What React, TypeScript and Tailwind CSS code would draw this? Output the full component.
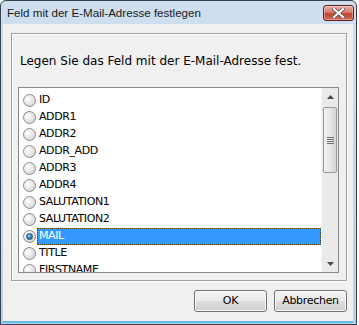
import React from 'react'

const fields = [
    'ID', 'ADDR1', 'ADDR2', 'ADDR_ADD', 'ADDR3', 'ADDR4',
    'SALUTATION1', 'SALUTATION2', 'MAIL', 'TITLE', 'FIRSTNAME',
]

function Radio({ checked }: { checked?: boolean }) {
    return (
        <div className="w-[13px] h-[13px] shrink-0 rounded-full border border-[#8a8a8a] bg-[radial-gradient(circle_at_35%_35%,#ffffff,#dcdcdc_70%,#c8c8c8)] flex items-center justify-center">
            {checked && (
                <div className="w-[7px] h-[7px] rounded-full border border-[#1d4770] bg-[radial-gradient(circle_at_40%_35%,#8fd0f5,#2a7ab8_60%,#103a66)]" />
            )}
        </div>
    )
}

function ScrollArrow({ up }: { up?: boolean }) {
    return (
        <div className="h-[17px] flex items-center justify-center">
            <svg width="7" height="4" viewBox="0 0 7 4">
                {up
                    ? <polygon points="3.5,0 7,4 0,4" fill="#4d4d4d" />
                    : <polygon points="0,0 7,0 3.5,4" fill="#4d4d4d" />}
            </svg>
        </div>
    )
}

function Scrollbar() {
    return (
        <div className="w-[17px] h-full flex flex-col bg-[#eaeaea] border-l border-[#f4f4f4]">
            <ScrollArrow up />
            <div className="flex-1 pt-[2px] px-[1px] pb-[1px] flex flex-col">
                <div className="h-[66px] rounded-[2px] border border-[#979797] bg-gradient-to-r from-[#f2f2f2] via-[#e6e6e6] to-[#d4d4d4] flex flex-col items-center justify-center gap-[1px]">
                    <div className="w-[7px] h-[1px] bg-[#6f6f6f]" />
                    <div className="w-[7px] h-[1px] bg-[#6f6f6f]" />
                    <div className="w-[7px] h-[1px] bg-[#6f6f6f]" />
                    <div className="w-[7px] h-[1px] bg-[#6f6f6f]" />
                </div>
                <div className="flex-1" />
            </div>
            <ScrollArrow />
        </div>
    )
}

function WinButton({ label }: { label: string }) {
    return (
        <button className="w-[73px] h-[22px] rounded-[3px] border border-[#707070] bg-[linear-gradient(#f2f2f2,#ebebeb_50%,#dddddd_50%,#cfcfcf)] shadow-[inset_0_0_0_1px_#fcfcfc] text-[11px] text-black font-['DejaVu_Sans',sans-serif] tracking-[-0.3px]">
            {label}
        </button>
    )
}

export default function App() {
    return (
        <div className="w-[359px] h-[325px] bg-white font-['DejaVu_Sans',sans-serif]">
            <div className="w-[357px] h-[325px] border border-[#34404d] rounded-t-[6px] bg-gradient-to-b from-[#cfdff0] to-[#b9d1ea] flex flex-col">
                {/* Title bar */}
                <div className="h-[23px] shrink-0 flex items-center pl-[6px] relative">
                    <span className="text-[11.6px] text-[#1a1a1a] font-['Liberation_Sans',sans-serif]">
                        Feld mit der E-Mail-Adresse festlegen
                    </span>
                    <div className="absolute right-[2px] top-[4px] w-[31px] h-[16px] rounded-[3px] border border-[#5e2219] bg-[linear-gradient(#e8b0a6,#d47a6b_45%,#c0412f_55%,#cf6a55)] shadow-[inset_0_0_0_1px_rgba(255,255,255,0.35)] flex items-center justify-center">
                        <svg width="13" height="10" viewBox="0 0 13 10">
                            <path d="M2 1 L11 9 M11 1 L2 9" stroke="#5a5a5a" strokeWidth="3.6" strokeLinecap="square" />
                            <path d="M2 1 L11 9 M11 1 L2 9" stroke="#ffffff" strokeWidth="2" strokeLinecap="square" />
                        </svg>
                    </div>
                </div>

                {/* Client area */}
                <div className="flex-1 ml-[2px] mr-[3px] mb-[3px] bg-[#f0f0f0] border-b border-[#f0f0f0] flex flex-col shadow-[0_2px_0_#64b9e4]">
                    {/* Group box */}
                    <div className="mt-[9px] ml-[8px] mr-[6px] h-[248px] border border-[#a0a0a0] shadow-[inset_1px_1px_0_#ffffff,1px_1px_0_#ffffff] flex flex-col pl-[6px] pr-[7px]">
                        <p className="mt-[20px] ml-[2px] h-[14px] text-[12px] leading-[14px] text-black whitespace-nowrap">
                            Legen Sie das Feld mit der E-Mail-Adresse fest.
                        </p>
                        <div className="mt-[19px] h-[186px] border border-[#828790] bg-white flex">
                            <div className="flex-1 overflow-hidden pt-[4px]">
                                {fields.map((f) => {
                                    const sel = f === 'MAIL'
                                    return (
                                        <div key={f} className="h-[17px] flex items-center pl-[4px]">
                                            <Radio checked={sel} />
                                            <div className={
                                                sel
                                                    ? 'ml-[1px] flex-1 h-[17px] flex items-center px-[2px] bg-[#3399ff] text-white outline-1 outline-dotted outline-[#5a3a00] -outline-offset-1'
                                                    : 'ml-[1px] flex-1 h-[17px] flex items-center px-[2px] text-black'
                                            }>
                                                <span className="text-[11px] tracking-[-0.4px]">{f}</span>
                                            </div>
                                        </div>
                                    )
                                })}
                            </div>
                            <Scrollbar />
                        </div>
                    </div>

                    {/* Buttons */}
                    <div className="mt-[9px] mr-[6px] flex justify-end gap-[7px]">
                        <WinButton label="OK" />
                        <WinButton label="Abbrechen" />
                    </div>
                </div>
            </div>
        </div>
    )
}
